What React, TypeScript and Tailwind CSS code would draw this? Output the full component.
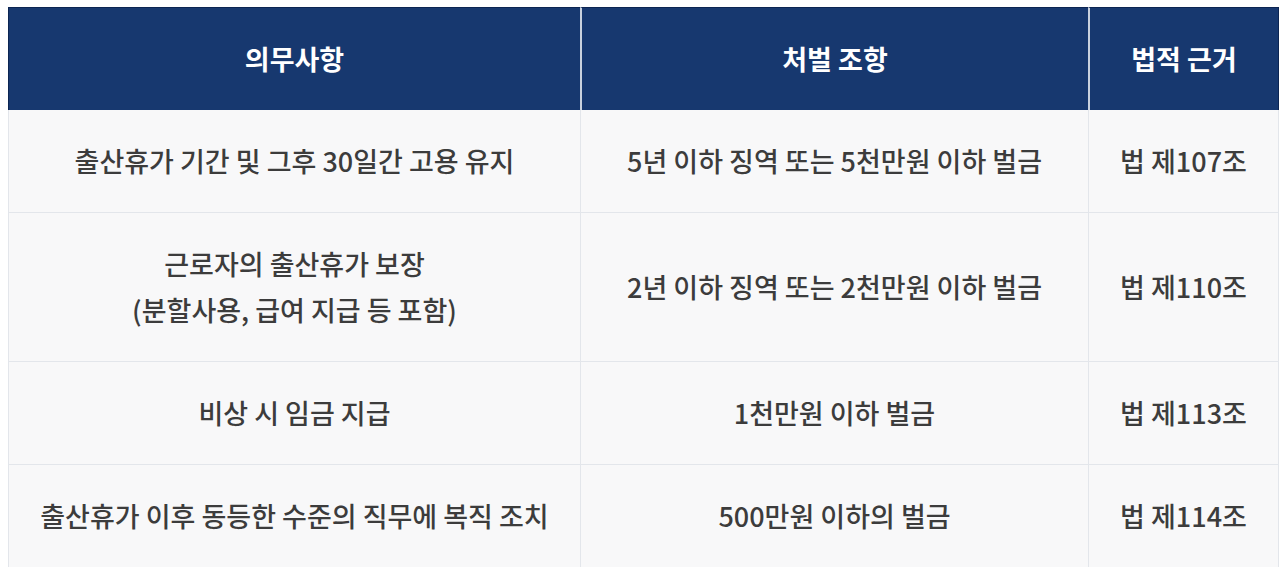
import React from "react";

const rows: { a: React.ReactNode; b: string; c: string }[] = [
  { a: "출산휴가 기간 및 그후 30일간 고용 유지", b: "5년 이하 징역 또는 5천만원 이하 벌금", c: "법 제107조" },
  {
    a: (
      <>
        근로자의 출산휴가 보장
        <br />
        (분할사용, 급여 지급 등 포함)
      </>
    ),
    b: "2년 이하 징역 또는 2천만원 이하 벌금",
    c: "법 제110조",
  },
  { a: "비상 시 임금 지급", b: "1천만원 이하 벌금", c: "법 제113조" },
  { a: "출산휴가 이후 동등한 수준의 직무에 복직 조치", b: "500만원 이하의 벌금", c: "법 제114조" },
];

export default function App() {
  const font = { fontFamily: '"Noto Sans CJK KR", "Noto Sans", sans-serif' };
  return (
    <div className="bg-white w-[1280px] h-[567px] overflow-hidden pt-[7px] pl-[8px]" style={font}>
      <div className="w-[1271px] grid grid-cols-[572px_508px_191px]">
        <div className="h-[103px] bg-[#17386f] border-t border-l border-[#0c2552] flex items-center justify-center text-white text-[27px] font-bold">
          의무사항
        </div>
        <div className="h-[103px] bg-[#17386f] border-t border-l-2 border-t-[#0c2552] border-l-[#c9d1de] flex items-center justify-center text-white text-[27px] font-bold">
          처벌 조항
        </div>
        <div className="h-[103px] bg-[#17386f] border-t border-l-2 border-r border-t-[#0c2552] border-l-[#c9d1de] border-r-[#0c2552] flex items-center justify-center text-white text-[27px] font-bold">
          법적 근거
        </div>
        {rows.map((r, i) => (
          <React.Fragment key={i}>
            <div className="bg-[#f8f8f9] border-l border-b border-[#e3e6eb] py-[28px] leading-[46px] text-center text-[27px] font-medium text-[#3c3c3c]">
              {r.a}
            </div>
            <div className="bg-[#f8f8f9] border-l border-b border-[#e3e6eb] py-[28px] leading-[46px] text-center text-[27px] font-medium text-[#3c3c3c] flex items-center justify-center">
              {r.b}
            </div>
            <div className="bg-[#f8f8f9] border-l border-r border-b border-[#e3e6eb] py-[28px] leading-[46px] text-center text-[27px] font-medium text-[#3c3c3c] flex items-center justify-center">
              {r.c}
            </div>
          </React.Fragment>
        ))}
      </div>
    </div>
  );
}
